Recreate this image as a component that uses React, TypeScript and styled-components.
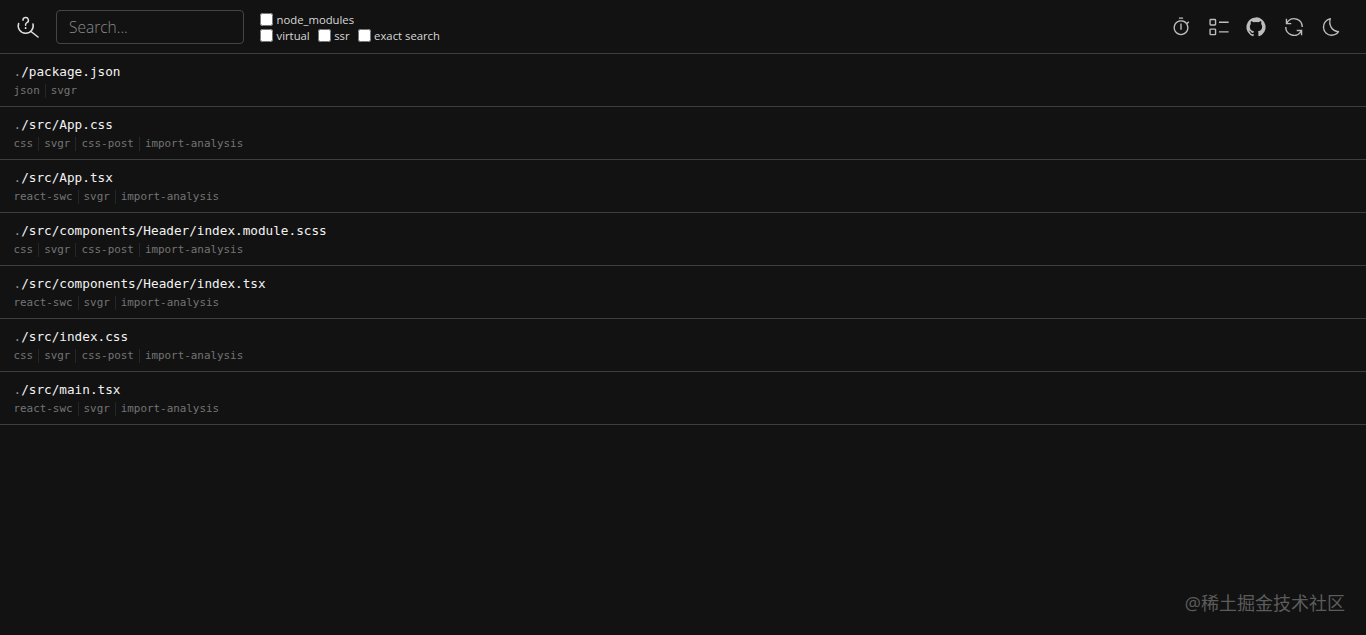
import React from 'react';
import styled, { createGlobalStyle } from 'styled-components';

const GlobalStyle = createGlobalStyle`
  html, body {
    margin: 0;
    height: 100%;
    background: #121212;
    color: #fff;
    font-family: "Open Sans", "Noto Sans", sans-serif;
  }
  #root { min-height: 100%; }
`;

const Page = styled.div`
  position: relative;
  height: 635px;
  overflow: hidden;
  background: #121212;
`;

const Header = styled.header`
  display: flex;
  align-items: center;
  height: 53px;
  padding: 0 24px 0 16px;
  border-bottom: 1px solid #3d3d3d;
`;

const Logo = styled.svg`
  width: 24px;
  height: 24px;
  flex: none;
  color: #e0e0e0;
`;

const SearchInput = styled.input`
  width: 188px;
  height: 34px;
  box-sizing: border-box;
  margin-left: 16px;
  padding: 0 12px;
  background: transparent;
  border: 1px solid #444;
  border-radius: 4px;
  outline: none;
  color: #ddd;
  font-family: "Open Sans", sans-serif;
  font-size: 15.5px;
  font-weight: 300;

  &::placeholder {
    color: #8a8a8a;
    opacity: 1;
  }
`;

const Filters = styled.div`
  display: flex;
  flex-direction: column;
  gap: 3px;
  margin-left: 16px;
  padding-top: 1px;
`;

const FilterRow = styled.div`
  display: flex;
  gap: 8px;
  height: 13px;
`;

const FilterLabel = styled.label`
  display: flex;
  align-items: center;
  gap: 3.5px;
  font-size: 11.3px;
  line-height: 13px;
  color: #d8d8d8;
  white-space: nowrap;
`;

const Checkbox = styled.input.attrs({ type: 'checkbox' })`
  width: 13px;
  height: 13px;
  margin: 0;
  flex: none;
`;

const Actions = styled.div`
  display: flex;
  align-items: center;
  gap: 15.5px;
  margin-left: auto;
`;

const ActionIcon = styled.svg`
  display: block;
  width: 22px;
  height: 22px;
  color: #bdbdbd;
  fill: currentColor;
`;

const ModuleList = styled.main`
  display: flex;
  flex-direction: column;
`;

const ModuleRow = styled.div`
  display: flex;
  flex-direction: column;
  justify-content: center;
  gap: 3px;
  height: 52px;
  padding: 0 14px;
  border-bottom: 1px solid #3d3d3d;
`;

const ModulePath = styled.div`
  margin-left: -0.5px;
  font-family: "DejaVu Sans Mono", monospace;
  font-size: 12.7px;
  line-height: 18px;
  color: #f2f2f2;
`;

const Dim = styled.span`
  color: #8c8c8c;
`;

const TagRow = styled.div`
  display: flex;
  align-items: center;
  margin-left: -0.5px;
  font-family: "DejaVu Sans Mono", monospace;
  font-size: 10.9px;
  line-height: 14px;
  color: #747474;
`;

const Tag = styled.span`
  & + & {
    margin-left: 5px;
    padding-left: 5px;
    border-left: 1px solid #262626;
  }
`;

const Watermark = styled.div`
  position: absolute;
  right: 21px;
  bottom: 20px;
  font-family: "Open Sans", "Noto Sans CJK SC", sans-serif;
  font-size: 18px;
  line-height: 24px;
  color: #5c5c5c;
`;

const modules = [
  { path: '/package.json', tags: ['json', 'svgr'] },
  { path: '/src/App.css', tags: ['css', 'svgr', 'css-post', 'import-analysis'] },
  { path: '/src/App.tsx', tags: ['react-swc', 'svgr', 'import-analysis'] },
  { path: '/src/components/Header/index.module.scss', tags: ['css', 'svgr', 'css-post', 'import-analysis'] },
  { path: '/src/components/Header/index.tsx', tags: ['react-swc', 'svgr', 'import-analysis'] },
  { path: '/src/index.css', tags: ['css', 'svgr', 'css-post', 'import-analysis'] },
  { path: '/src/main.tsx', tags: ['react-swc', 'svgr', 'import-analysis'] },
];

const actionPaths = [
  // timer
  'M15 11h2v9h-2zm-2-9h6v2h-6zM28 9l-1.42-1.41l-2.25 2.25a10.94 10.94 0 1 0 1.18 1.65zM16 26a9 9 0 1 1 9-9a9 9 0 0 1-9 9z',
  // list
  'M16 8h14v2H16zm0 14h14v2H16zM10 14H4a2.002 2.002 0 0 1-2-2V6a2.002 2.002 0 0 1 2-2h6a2.002 2.002 0 0 1 2 2v6a2.002 2.002 0 0 1-2 2zM4 6v6h6.001L10 6zm6 22H4a2.002 2.002 0 0 1-2-2v-6a2.002 2.002 0 0 1 2-2h6a2.002 2.002 0 0 1 2 2v6a2.002 2.002 0 0 1-2 2zm-6-8v6h6.001L10 20z',
  // github
  'M16 2a14 14 0 0 0-4.43 27.28c.7.13 1-.3 1-.67v-2.38c-3.89.84-4.71-1.88-4.71-1.88a3.71 3.71 0 0 0-1.62-2.05c-1.27-.86.1-.85.1-.85a2.94 2.94 0 0 1 2.14 1.45a3 3 0 0 0 4.08 1.16a2.93 2.93 0 0 1 .88-1.87c-3.1-.36-6.37-1.56-6.37-6.92a5.4 5.4 0 0 1 1.44-3.76a5 5 0 0 1 .14-3.7s1.17-.38 3.85 1.43a13.3 13.3 0 0 1 7 0c2.67-1.81 3.84-1.43 3.84-1.43a5 5 0 0 1 .14 3.7a5.4 5.4 0 0 1 1.44 3.76c0 5.38-3.27 6.56-6.39 6.91a3.33 3.33 0 0 1 .95 2.59v3.84c0 .46.25.81 1 .67A14 14 0 0 0 16 2Z',
  // reload
  'M12 10H6.78A11 11 0 0 1 27 16h2A13 13 0 0 0 6 7.68V4H4v8h8zm8 12h5.22A11 11 0 0 1 5 16H3a13 13 0 0 0 23 8.32V28h2v-8h-8z',
  // theme
  'M13.503 5.414a15.076 15.076 0 0 0 11.593 18.194a11.113 11.113 0 0 1-7.975 3.39c-.138 0-.278.005-.418 0a11.094 11.094 0 0 1-3.2-21.584M14.98 3a1.002 1.002 0 0 0-.175.016a13.096 13.096 0 0 0 1.825 25.981c.164.006.328 0 .49 0a13.072 13.072 0 0 0 10.703-5.555a1.01 1.01 0 0 0-.783-1.565A13.08 13.08 0 0 1 15.89 4.38A1.015 1.015 0 0 0 14.98 3z',
];

export default function App() {
  return (
    <Page>
      <GlobalStyle />
      <Header>
        <Logo
          viewBox="0 0 24 24"
          fill="none"
          stroke="currentColor"
          strokeWidth={1.5}
          strokeLinecap="round"
          strokeLinejoin="round"
        >
          <path d="M2.6 8.5a7.5 7.5 0 1 0 14.4 .5" />
          <path d="M15 16.5L22 22" />
          <path d="M7 5.2a2.7 2.7 0 1 1 3.9 2.4c-.9.5-1.3 1-1.3 2v.6" />
          <path d="M9.6 13v.2" strokeWidth={1.8} />
        </Logo>
        <SearchInput placeholder="Search..." />
        <Filters>
          <FilterRow>
            <FilterLabel>
              <Checkbox />
              node_modules
            </FilterLabel>
          </FilterRow>
          <FilterRow>
            <FilterLabel>
              <Checkbox />
              virtual
            </FilterLabel>
            <FilterLabel>
              <Checkbox />
              ssr
            </FilterLabel>
            <FilterLabel>
              <Checkbox />
              exact search
            </FilterLabel>
          </FilterRow>
        </Filters>
        <Actions>
          {actionPaths.map((d) => (
            <ActionIcon key={d} viewBox="0 0 32 32">
              <path d={d} />
            </ActionIcon>
          ))}
        </Actions>
      </Header>
      <ModuleList>
        {modules.map((m) => (
          <ModuleRow key={m.path}>
            <ModulePath>
              <Dim>.</Dim>
              {m.path}
            </ModulePath>
            <TagRow>
              {m.tags.map((t) => (
                <Tag key={t}>{t}</Tag>
              ))}
            </TagRow>
          </ModuleRow>
        ))}
      </ModuleList>
      <Watermark>@稀土掘金技术社区</Watermark>
    </Page>
  );
}
